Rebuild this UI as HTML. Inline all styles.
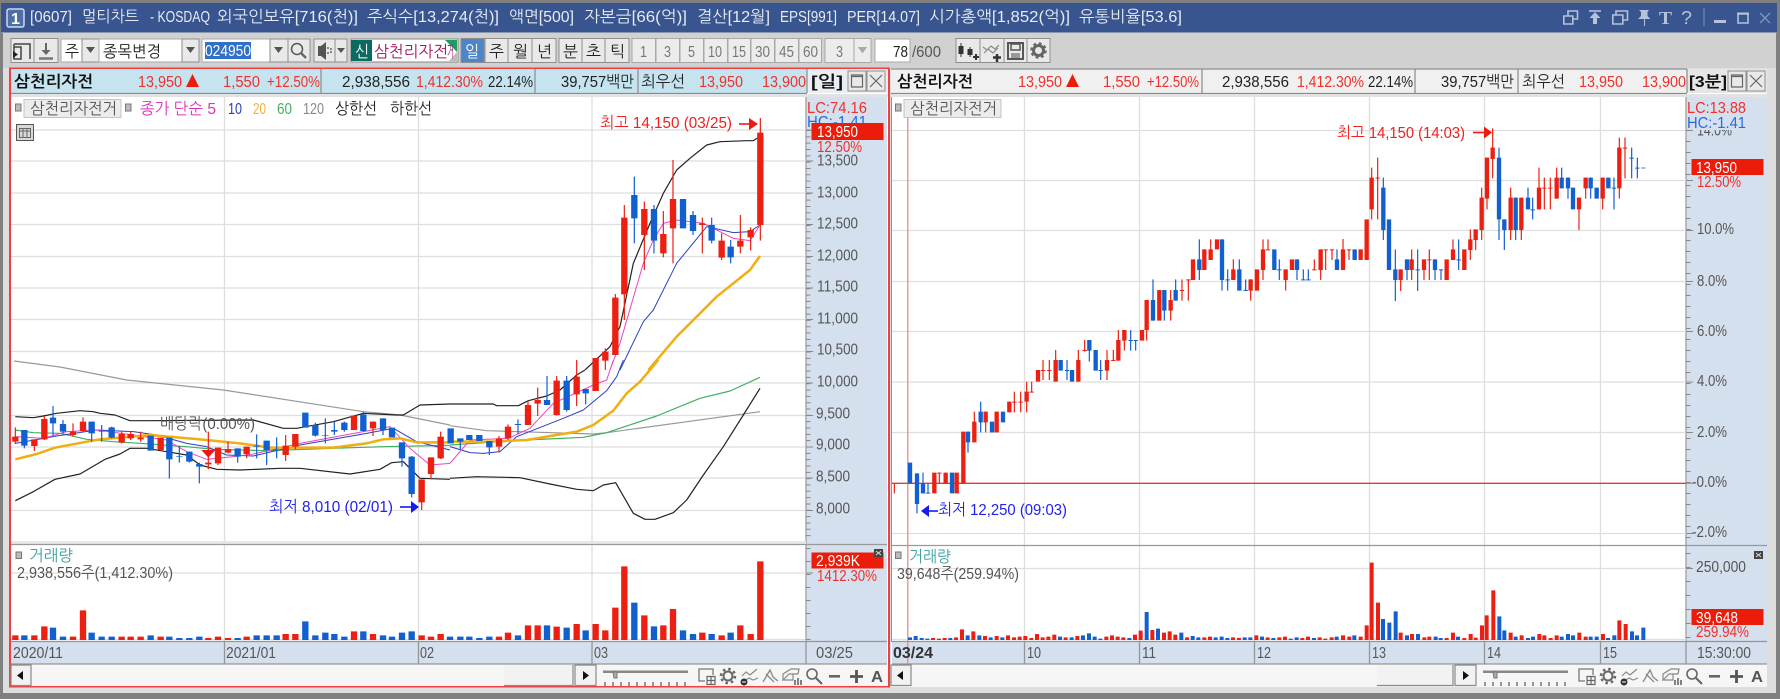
<!DOCTYPE html>
<html><head><meta charset="utf-8"><title>멀티차트</title>
<style>
html,body{margin:0;padding:0;background:#dcdcdc;width:1780px;height:699px;overflow:hidden}
svg{display:block;filter:blur(.35px)}
text{font-family:"Liberation Sans","NanumGothic","Noto Sans CJK KR",sans-serif;font-size:16px;fill:#444}
.t{fill:#e6ebf4}.r{fill:#f0302a}.k{fill:#222}.g{fill:#555}.w{fill:#fff}.b{font-weight:bold;fill:#111}
.bl{fill:#2020f0}.rr{fill:#f02020}
.ru{stroke:#ec2012;fill:none}.bu{stroke:#1260d0;fill:none}
.ln{fill:none;stroke-linejoin:round}
.btn{fill:#e9e9e9;stroke:#8e8e8e}
.ic{fill:none;stroke:#555;stroke-width:1.5}
.ti{fill:none;stroke:#b4c2da;stroke-width:1.6}
</style></head><body>
<svg width="1780" height="699" viewBox="0 0 1780 699" xmlns="http://www.w3.org/2000/svg">
<rect width="1780" height="699" fill="#808080"/>
<rect x="3" y="3" width="1773" height="690" fill="#dedede"/>
<!-- title -->
<rect x="1" y="3" width="1776" height="29" fill="#39558f"/>
<rect x="1" y="32" width="1776" height="1" fill="#8a97b0"/>
<rect x="7" y="9" width="17" height="18" rx="2" fill="#4f6ea8" stroke="#cfd8e8" stroke-width="1.5"/>
<text x="11" y="24" class="w" style="font-weight:bold" textLength="9" lengthAdjust="spacingAndGlyphs">1</text>
<text x="30" y="22" class="t" textLength="42" lengthAdjust="spacingAndGlyphs">[0607]</text>
<text x="82" y="22" class="t" textLength="57" lengthAdjust="spacingAndGlyphs">멀티차트</text>
<text x="150" y="22" class="t" textLength="60" lengthAdjust="spacingAndGlyphs">- KOSDAQ</text>
<text x="217" y="22" class="t" textLength="141" lengthAdjust="spacingAndGlyphs">외국인보유[716(천)]</text>
<text x="367" y="22" class="t" textLength="132" lengthAdjust="spacingAndGlyphs">주식수[13,274(천)]</text>
<text x="509" y="22" class="t" textLength="65" lengthAdjust="spacingAndGlyphs">액면[500]</text>
<text x="584" y="22" class="t" textLength="103" lengthAdjust="spacingAndGlyphs">자본금[66(억)]</text>
<text x="697" y="22" class="t" textLength="73" lengthAdjust="spacingAndGlyphs">결산[12월]</text>
<text x="780" y="22" class="t" textLength="57" lengthAdjust="spacingAndGlyphs">EPS[991]</text>
<text x="847" y="22" class="t" textLength="73" lengthAdjust="spacingAndGlyphs">PER[14.07]</text>
<text x="929" y="22" class="t" textLength="141" lengthAdjust="spacingAndGlyphs">시가총액[1,852(억)]</text>
<text x="1079" y="22" class="t" textLength="103" lengthAdjust="spacingAndGlyphs">유통비율[53.6]</text>
<!-- title icons -->
<path class="ti" d="M1563.8 16h9v8h-9zM1568 16v-5h9.500v8h-4.500"/>
<path class="ti" d="M1589 11h12" /><path d="M1595 12l5.500 6h-3.500v6h-4v-6h-3.500z" fill="#b4c2da"/>
<path class="ti" d="M1612.800 15h10v9h-10zM1616 15v-4h11.500v9h-4"/>
<path d="M1639 10h10l-1.500 2v4l3 3h-5.500v7h-1v-7h-6l3-3v-4z" fill="#b4c2da"/>
<text x="1659" y="24" style="font-family:'Liberation Serif',serif;fill:#b4c2da;font-size:18px;font-weight:bold" textLength="13" lengthAdjust="spacingAndGlyphs">T</text>
<text x="1681" y="24" style="fill:#b4c2da;font-size:18px" textLength="11" lengthAdjust="spacingAndGlyphs">?</text>
<path d="M1704 8v18" stroke="#7e90b5" stroke-width="1" fill="none"/>
<rect x="1714" y="20" width="12" height="3" fill="#b4c2da"/>
<path class="ti" d="M1738 14h10v9h-10z"/><path d="M1737 12.500h12v2h-12z" fill="#b4c2da"/>
<path d="M1760 13l10 10M1770 13l-10 10" stroke="#7f92b8" stroke-width="1.400" fill="none"/>
<!-- toolbar -->
<rect x="3" y="33" width="1773" height="35" fill="#d1d1d1"/>
<g stroke-width="1">
<rect class="btn" x="11" y="38.500" width="23" height="24"/><rect class="btn" x="34" y="38.500" width="24" height="24"/>
<rect x="61" y="39" width="21" height="23" fill="#fff" stroke="#aaa"/><rect class="btn" x="82" y="39" width="17" height="23"/>
<rect x="99" y="39" width="83" height="23" fill="#fff" stroke="#aaa"/><rect class="btn" x="182" y="39" width="17" height="23"/>
<rect x="202" y="39" width="68" height="23" fill="#fff" stroke="#aaa"/><rect x="205" y="42" width="46" height="17" fill="#2f70c8"/>
<rect class="btn" x="270" y="39" width="18" height="23"/><rect class="btn" x="288" y="39" width="22" height="23"/>
<rect class="btn" x="314" y="39" width="21" height="23"/><rect class="btn" x="335" y="39" width="12" height="23"/>
<rect x="351" y="39" width="107" height="23" fill="#fff" stroke="#888"/><rect x="351" y="40" width="21" height="21" fill="#0d6a63"/>
<path d="M445 40h12v12z" fill="#17a060"/><path d="M457 52v9h-8z" fill="#bbb"/>
<rect x="461" y="38.500" width="23" height="24" fill="#4d86c8" stroke="#8e8e8e"/>
<rect class="btn" x="485" y="38.500" width="23" height="24"/><rect class="btn" x="508" y="38.500" width="24" height="24"/><rect class="btn" x="532" y="38.500" width="24" height="24"/>
<rect class="btn" x="559" y="38.500" width="23" height="24"/><rect class="btn" x="582" y="38.500" width="23" height="24"/><rect class="btn" x="605" y="38.500" width="24" height="24"/>
<g fill="#ececec" stroke="#a8a8a8"><rect x="632" y="38.500" width="23.500" height="24"/><rect x="656" y="38.500" width="23.500" height="24"/><rect x="680" y="38.500" width="23.500" height="24"/><rect x="704" y="38.500" width="23.500" height="24"/><rect x="728" y="38.500" width="22.500" height="24"/><rect x="751" y="38.500" width="23.500" height="24"/><rect x="775" y="38.500" width="23.500" height="24"/><rect x="799" y="38.500" width="22.500" height="24"/><rect x="825" y="38.500" width="29" height="24"/><rect x="854" y="38.500" width="17" height="24"/></g>
<rect x="875" y="39" width="35" height="23" fill="#fff" stroke="#aaa"/>
<rect class="btn" x="956" y="38.500" width="24" height="24"/><rect class="btn" x="980" y="38.500" width="24" height="24"/><rect class="btn" x="1004" y="38.500" width="23" height="24"/><rect class="btn" x="1027" y="38.500" width="23" height="24"/>
</g>
<!-- toolbar icons -->
<path d="M14 44h16v15M14 59V47h7v12zM14 44v3" fill="none" stroke="#444" stroke-width="1.500"/><path d="M13 51l5 3.500-5 3.500z" fill="#222"/>
<path d="M46 43v9" stroke="#666" stroke-width="2"/><path d="M41.500 50h9l-4.500 5z" fill="#666"/><path d="M39 58.500h14" stroke="#777" stroke-width="2.500"/>
<path d="M86 47h9l-4.500 6z M186 47h9l-4.500 6zM274 47h9l-4.500 6zM337 48h8l-4 5zM858 47h9l-4.500 6z" fill="#555"/><path d="M858 47h9l-4.500 6z" fill="#aaa"/>
<circle cx="297" cy="49" r="5.500" class="ic" stroke-width="2"/><path d="M301 53l5 5" stroke="#666" stroke-width="2.500"/>
<path d="M318 46v10h3l5 4V42l-5 4z" fill="#555"/><path d="M328 47v2M331 48v2M328 52v2M331 51v2" stroke="#666" stroke-width="1.500"/>
<path d="M961 43v14M970 47v10" stroke="#333"/><rect x="958.500" y="46" width="5" height="8" fill="#333"/><rect x="967.500" y="49" width="5" height="6" fill="#333"/><path d="M973 57h6M976 54v6" stroke="#333" stroke-width="2"/>
<path d="M983 47l4 3 4-4 4 3 4-4M984 53l4-4 5 4 5-5" fill="none" stroke="#888" stroke-width="1.200"/><path d="M993 57.500h8M997 54v8" stroke="#333" stroke-width="2.500"/>
<path d="M1008 43h15v16h-15z" fill="none" stroke="#555" stroke-width="2"/><rect x="1011" y="44" width="9" height="6" fill="none" stroke="#555" stroke-width="1.500"/><rect x="1011" y="53" width="9" height="5" fill="#999"/>
<circle cx="1038.500" cy="50.500" r="5" fill="none" stroke="#666" stroke-width="3"/><circle cx="1038.500" cy="50.500" r="7" fill="none" stroke="#666" stroke-width="2.500" stroke-dasharray="2.800 2.700"/>
<text x="65" y="57" class="k" textLength="14" lengthAdjust="spacingAndGlyphs">주</text>
<text x="103" y="57" class="k" textLength="58" lengthAdjust="spacingAndGlyphs">종목변경</text>
<text x="205" y="56" class="w" textLength="46" lengthAdjust="spacingAndGlyphs">024950</text>
<text x="355" y="57" class="w" textLength="14" lengthAdjust="spacingAndGlyphs">신</text>
<text x="374" y="57" style="fill:#a0145a" textLength="74" lengthAdjust="spacingAndGlyphs">삼천리자전</text>
<text x="447" y="57" style="fill:#a0145a" textLength="7" lengthAdjust="spacingAndGlyphs">거</text>
<text x="465" y="57" class="w" textLength="14" lengthAdjust="spacingAndGlyphs">일</text>
<text x="489" y="57" class="k" textLength="15" lengthAdjust="spacingAndGlyphs">주</text>
<text x="513" y="57" class="k" textLength="15" lengthAdjust="spacingAndGlyphs">월</text>
<text x="537" y="57" class="k" textLength="15" lengthAdjust="spacingAndGlyphs">년</text>
<text x="563" y="57" class="k" textLength="15" lengthAdjust="spacingAndGlyphs">분</text>
<text x="586" y="57" class="k" textLength="15" lengthAdjust="spacingAndGlyphs">초</text>
<text x="610" y="57" class="k" textLength="15" lengthAdjust="spacingAndGlyphs">틱</text>
<g class="g" style="fill:#777">
<text x="640" y="57" style="fill:#777" textLength="7" lengthAdjust="spacingAndGlyphs">1</text>
<text x="664" y="57" style="fill:#777" textLength="7" lengthAdjust="spacingAndGlyphs">3</text>
<text x="688" y="57" style="fill:#777" textLength="7" lengthAdjust="spacingAndGlyphs">5</text>
<text x="708" y="57" style="fill:#777" textLength="14" lengthAdjust="spacingAndGlyphs">10</text>
<text x="732" y="57" style="fill:#777" textLength="14" lengthAdjust="spacingAndGlyphs">15</text>
<text x="755" y="57" style="fill:#777" textLength="15" lengthAdjust="spacingAndGlyphs">30</text>
<text x="779" y="57" style="fill:#777" textLength="15" lengthAdjust="spacingAndGlyphs">45</text>
<text x="803" y="57" style="fill:#777" textLength="15" lengthAdjust="spacingAndGlyphs">60</text>
<text x="836" y="57" style="fill:#777" textLength="7" lengthAdjust="spacingAndGlyphs">3</text>
</g>
<text x="893" y="57" class="k" textLength="15" lengthAdjust="spacingAndGlyphs">78</text>
<text x="912" y="57" class="g" textLength="29" lengthAdjust="spacingAndGlyphs">/600</text>

<!-- LEFT PANEL -->
<rect x="9" y="67.500" width="881" height="620" fill="#f04040"/>
<rect x="11" y="69" width="877" height="617" fill="#fff"/>
<rect x="11" y="69" width="796" height="24" fill="#c6e4f0"/>
<rect x="807" y="69" width="81" height="24" fill="#e9eef2"/>
<path d="M11 93.500H807M321 69v24M535 69v24M638 69v24M807 69v24" stroke="#8a8a8a" fill="none" stroke-width="1.200"/>
<rect x="11" y="94" width="877" height="3" fill="#e2e2e2"/>
<!-- RIGHT PANEL -->
<rect x="891" y="69" width="876" height="618" fill="#fff"/>
<rect x="891" y="69" width="796" height="24" fill="#f0f0f0"/>
<rect x="1687" y="69" width="80" height="24" fill="#e6e6e6"/>
<path d="M891 93.500H1687M891 69H1687M1202 69v24M1415 69v24M1518 69v24M1687 69v24" stroke="#8a8a8a" fill="none" stroke-width="1.200"/>
<rect x="891" y="94" width="876" height="3" fill="#e2e2e2"/>
<rect x="891" y="97" width="1" height="545" fill="#a88"/>
<!-- header buttons -->
<rect class="btn" x="848" y="71" width="18" height="20"/><rect class="btn" x="867" y="71" width="18" height="20"/>
<rect class="btn" x="1728" y="71" width="18" height="20"/><rect class="btn" x="1747" y="71" width="18" height="20"/>
<g fill="none" stroke="#666" stroke-width="1.200"><path d="M851.500 75h11v12h-11zM851.500 76.500h11M870 75l12 12M882 75l-12 12"/><path d="M1731.500 75h11v12h-11zM1731.500 76.500h11M1750 75l12 12M1762 75l-12 12"/></g>
<!-- left header text -->
<text x="14" y="87" class="b" textLength="79" lengthAdjust="spacingAndGlyphs">삼천리자전</text>
<text x="138" y="87" class="r" textLength="44" lengthAdjust="spacingAndGlyphs">13,950</text>
<path d="M186 87l6.500-13 6.500 13z" fill="#ec1c0a"/>
<text x="223" y="87" class="r" textLength="37" lengthAdjust="spacingAndGlyphs">1,550</text>
<text x="267" y="87" class="r" textLength="53" lengthAdjust="spacingAndGlyphs">+12.50%</text>
<text x="342" y="87" class="k" textLength="68" lengthAdjust="spacingAndGlyphs">2,938,556</text>
<text x="416" y="87" class="r" textLength="67" lengthAdjust="spacingAndGlyphs">1,412.30%</text>
<text x="488" y="87" class="k" textLength="45" lengthAdjust="spacingAndGlyphs">22.14%</text>
<text x="561" y="87" class="k" textLength="73" lengthAdjust="spacingAndGlyphs">39,757백만</text>
<text x="641" y="87" class="k" textLength="44" lengthAdjust="spacingAndGlyphs">최우선</text>
<text x="699" y="87" class="r" textLength="44" lengthAdjust="spacingAndGlyphs">13,950</text>
<text x="762" y="87" class="r" textLength="44" lengthAdjust="spacingAndGlyphs">13,900</text>
<text x="811" y="87" class="b" textLength="32" lengthAdjust="spacingAndGlyphs">[일]</text>
<!-- right header text -->
<text x="897" y="87" class="b" textLength="76" lengthAdjust="spacingAndGlyphs">삼천리자전</text>
<text x="1018" y="87" class="r" textLength="44" lengthAdjust="spacingAndGlyphs">13,950</text>
<path d="M1066 87l6.500-13 6.500 13z" fill="#ec1c0a"/>
<text x="1103" y="87" class="r" textLength="37" lengthAdjust="spacingAndGlyphs">1,550</text>
<text x="1147" y="87" class="r" textLength="52" lengthAdjust="spacingAndGlyphs">+12.50%</text>
<text x="1222" y="87" class="k" textLength="67" lengthAdjust="spacingAndGlyphs">2,938,556</text>
<text x="1297" y="87" class="r" textLength="67" lengthAdjust="spacingAndGlyphs">1,412.30%</text>
<text x="1368" y="87" class="k" textLength="45" lengthAdjust="spacingAndGlyphs">22.14%</text>
<text x="1441" y="87" class="k" textLength="73" lengthAdjust="spacingAndGlyphs">39,757백만</text>
<text x="1522" y="87" class="k" textLength="43" lengthAdjust="spacingAndGlyphs">최우선</text>
<text x="1579" y="87" class="r" textLength="44" lengthAdjust="spacingAndGlyphs">13,950</text>
<text x="1642" y="87" class="r" textLength="44" lengthAdjust="spacingAndGlyphs">13,900</text>
<text x="1689" y="87" class="b" textLength="38" lengthAdjust="spacingAndGlyphs">[3분]</text>

<!-- axis backgrounds -->
<rect x="806" y="97" width="81" height="545" fill="#d5e0ee"/>
<rect x="1686" y="97" width="81" height="545" fill="#d5e0ee"/>
<path d="M806 97V642M1686 97V642" stroke="#9a9a9a" stroke-width="1.200" fill="none"/>
<!-- left grid -->
<path d="M11 130H806M11 161H806M11 193H806M11 224.500H806M11 256.500H806M11 288H806M11 319.500H806M11 351.500H806M11 383H806M11 415.500H806M11 447H806M11 478H806M11 510.500H806M11 573H806M11 639.500H806M224.500 97V642M418.500 97V642M592 97V642" stroke="#dedede" stroke-width="1.300" fill="none"/>
<rect x="11" y="541" width="795" height="3" fill="#e8e8e8"/><path d="M11 544.500H887" stroke="#999" stroke-width="1.200"/>
<!-- right grid -->
<path d="M892 130.500H1686M892 180.500H1686M892 230.500H1686M892 281.500H1686M892 331.500H1686M892 382H1686M892 432.500H1686M892 533.500H1686M892 568.500H1686M892 639.500H1686M1024.500 97V642M1139.500 97V642M1254.500 97V642M1369.500 97V642M1484.500 97V642M1600.500 97V642" stroke="#dedede" stroke-width="1.300" fill="none"/>
<path d="M892 545.500H1767" stroke="#999" stroke-width="1.200"/>
<path d="M907.800 105V664" stroke="#ea8a8a" stroke-width="1.300"/>
<path d="M892 483.300H1686" stroke="#f03434" stroke-width="1.400"/>
<!-- axis ticks -->
<g fill="none" stroke="#888">
<path d="M808 130V540" stroke-width="5" stroke-dasharray="1 5.330"/>
<path d="M806 130h7M806 161h7M806 193h7M806 224.500h7M806 256.500h7M806 288h7M806 319.500h7M806 351.500h7M806 383h7M806 415.500h7M806 447h7M806 478h7M806 510.500h7M806 573h7"/>
<path d="M808 548V640" stroke-width="5" stroke-dasharray="1 12"/>
<path d="M1688 130V540" stroke-width="5" stroke-dasharray="1 10"/>
<path d="M1686 130.500h7M1686 180.500h7M1686 230.500h7M1686 281.500h7M1686 331.500h7M1686 382h7M1686 432.500h7M1686 483.300h7M1686 533.500h7M1686 568.500h7"/>
<path d="M1688 553V640" stroke-width="5" stroke-dasharray="1 13"/>
</g>

<!-- LEFT MA LINES Z4 -->
<g class="ln" transform="translate(0,380) scale(.33333)">
<path stroke="#999" stroke-width="3.600" fill="none" d="M42 -57L180 -39L380 0L670 30L1090 95L1200 105L1350 135"/>
<path stroke="#222" stroke-width="3.600" fill="none" d="M46 110L100 113L130 108L170 100L240 92L280 95L300 100L345 105L390 122L450 122L760 120L850 145L890 145L1000 125L1090 100L1190 105L1210 105L1260 75L1350 72"/>
<path stroke="#222" stroke-width="3.600" fill="none" d="M46 362L100 335L165 298L240 282L315 238L360 222L390 205L440 205L500 215L560 225L600 255L650 268L720 270L840 265L900 265L1050 282L1140 268L1175 248L1210 245L1260 295L1350 298"/>
<path stroke="#3fb060" stroke-width="3.600" fill="none" d="M46 150L100 158L180 160L260 178L340 185L420 190L560 200L640 208L800 212L1000 205L1150 200L1350 196"/>
<path stroke="#2a40c0" stroke-width="3" fill="none" d="M46 190L130 175L170 168L290 150L400 155L470 165L560 190L620 200L680 225L760 228L900 195L1100 160L1180 145L1250 185L1350 210"/>
<path stroke="#ee44c0" stroke-width="3" fill="none" d="M46 170L130 175L200 155L290 150L400 165L500 180L560 215L620 238L700 230L760 222L900 190L1090 155L1170 140L1230 205L1290 255L1350 250"/>
<path stroke="#f0ae10" stroke-width="7.500" fill="none" d="M46 238L110 222L165 203L260 185L300 178L450 165L600 178L720 190L810 203L1000 203L1100 190L1150 178L1200 175L1250 187L1350 187"/>
</g>
<!-- LEFT LINES Z12 -->
<g class="ln" transform="translate(450,360) scale(.33333)">
<path stroke="#999" stroke-width="3.600" fill="none" d="M0 197L110 212L210 215L430 222L470 218L930 155"/>
<path stroke="#222" stroke-width="3.600" fill="none" d="M0 132H130L140 137H205L235 122L290 108L330 90L380 45L405 30"/>
<path stroke="#222" stroke-width="3.600" fill="none" d="M0 355L80 350L210 353L300 372L380 388L430 392L460 375L497 368L550 460L585 478L615 478L670 458L710 420L760 345L820 260L880 165L930 85"/>
<path stroke="#3fb060" stroke-width="3.600" fill="none" d="M0 255L120 247L230 240L400 232L470 218L620 168L750 115L840 93L930 52"/>
<path stroke="#2a40c0" stroke-width="3" fill="none" d="M0 260L60 278L100 280L150 275L200 230L340 175L400 150L470 92L500 50L520 0"/>
<path stroke="#ee44c0" stroke-width="3" fill="none" d="M0 310L60 240L175 235L240 205L310 130L430 75L470 60L490 0"/>
<path stroke="#f0ae10" stroke-width="7.500" fill="none" d="M0 245L120 245L230 240L380 215L430 195L490 152L530 100L570 65L625 0"/>
</g>
<!-- LEFT LINES Z5 -->
<g class="ln" transform="translate(450,120) scale(.33333)">
<path stroke="#222" stroke-width="3.600" fill="none" d="M405 750L480 680L510 620L550 430L600 310L640 220L680 150L720 115L770 75L810 65L890 62L910 62L932 48"/>
<path stroke="#2a40c0" stroke-width="3" fill="none" d="M510 750L580 605L610 570L680 430L770 320L850 338L900 335L930 315"/>
<path stroke="#ee44c0" stroke-width="3" fill="none" d="M480 750L510 670L580 430L610 360L640 310L680 300L760 310L850 355L900 362L930 315"/>
<path stroke="#f0ae10" stroke-width="7.500" fill="none" d="M595 750L680 650L760 570L800 530L900 450L930 408"/>
</g>
<!-- LEFT CANDLES Z4 -->
<g transform="translate(0,380) scale(.33333)">
<path class="ru" stroke-width="3.600" d="M46 142V192M103 178V213M133 108V180M219 130V170M249 112V155M365 155V190M392 155V180M422 155V185M482 173V212M625 155V268M654 203V255M684 185V220M740 200V235M857 165V243M886 162V208M1062 107V150M1119 125V168M1265 298V390M1293 232V298M1322 155V237"/>
<path class="ru" stroke-width="19" d="M46 170V185M103 178V198M133 117V178M219 155V165M249 125V153M365 162V188M392 162V175M422 172V178M482 173V210M625 248V253M654 203V250M684 207V218M740 200V222M857 197V225M886 162V200M1062 107V150M1119 125V145M1265 298V367M1293 232V282M1322 170V235"/>
<path class="bu" stroke-width="3.600" d="M73 150V205M159 78V165M189 120V160M275 125V185M305 135V185M335 140V175M508 173V296M538 198V248M568 215V248M598 248V310M713 205V248M770 163V235M800 182V255M830 172V235M946 128V170M976 115V190M1003 125V165M1033 125V155M1090 95V155M1149 115V165M1206 187V260M1235 228V352"/>
<path class="bu" stroke-width="19" d="M73 150V197M159 113V130M189 132V155M275 125V160M305 152V155M335 142V173M452 167V212M508 173V238M538 228V230M568 215V245M598 252V260M713 205V230M770 197V200M800 182V210M830 208V210M916 98V143M946 135V167M976 165V167M1003 150V155M1033 128V150M1090 103V153M1149 115V150M1176 143V172M1206 187V235M1235 230V342"/>
<path d="M604 210H646L625 233Z" fill="#f01810"/>
</g>
<!-- LEFT CANDLES Z12 -->
<g transform="translate(450,360) scale(.33333)">
<path class="ru" stroke-width="3.600" d="M147 228V277M174 193V240M234 122V195M263 83V168M320 48V167M380 0V138M437 -6V93"/>
<path class="ru" stroke-width="19" d="M147 235V260M174 200V235M234 135V195M263 120V131M320 62V165M380 50V103M437 -6V93"/>
<path class="bu" stroke-width="3.600" d="M31 235V270M118 243V285M204 178V222M291 48V135M350 48V155M407 87V133"/>
<path class="bu" stroke-width="19" d="M2 205V250M31 235V245M58 225V240M88 225V243M118 243V262M204 192V195M291 120V135M350 62V150M407 87V100"/>
</g>
<!-- LEFT CANDLES Z5 -->
<g transform="translate(450,120) scale(.33333)">
<path class="ru" stroke-width="3.600" d="M466 685V750M496 522V705M523 255V600M583 245V450M640 273V412M669 120V430M757 293V400M815 340V420M871 285V400M902 322V392M931 -6V362"/>
<path class="ru" stroke-width="19" d="M466 695V722M496 533V705M523 293V523M583 267V345M640 342V400M669 237V325M757 310V315M815 362V413M871 362V380M902 330V352M931 38V315"/>
<path class="bu" stroke-width="3.600" d="M553 170V370M612 255V400M729 273V345M785 293V370M842 360V430"/>
<path class="bu" stroke-width="19" d="M553 225V295M612 267V362M699 237V325M729 285V333M785 315V362M842 380V412"/>
</g>
<!-- LEFT VOLUME -->
<g transform="translate(0,530) scale(.33333)" fill="none">
<path class="ru" stroke-width="19" d="M46 330V316M103 330V316M133 330V289M219 330V320M249 330V241M365 330V320M392 330V320M422 330V320M482 330V320M625 330V324M654 330V320M684 330V324M740 330V320M857 330V312M886 330V312M1062 330V304M1119 330V312M1265 330V316M1293 330V320M1322 330V312"/>
<path class="bu" stroke-width="19" d="M73 330V316M159 330V293M189 330V320M275 330V308M305 330V320M335 330V320M452 330V316M508 330V320M538 330V324M568 330V324M598 330V320M713 330V324M770 330V316M800 330V316M830 330V316M916 330V274M946 330V316M976 330V308M1003 330V312M1033 330V320M1090 330V304M1149 330V316M1176 330V320M1206 330V308M1235 330V304M1350 330V320"/>
</g>
<g transform="translate(450,530) scale(.33333)" fill="none">
<path class="ru" stroke-width="19" d="M147 330V320M174 330V308M234 330V286M263 330V286M320 330V290M380 330V282M437 330V282M466 330V301M496 330V233M523 330V109M583 330V256M640 330V286M669 330V237M757 330V308M815 330V316M871 330V286M902 330V312M931 330V94"/>
<path class="bu" stroke-width="19" d="M31 330V320M58 330V320M88 330V324M118 330V320M204 330V316M291 330V286M350 330V293M407 330V301M553 330V218M612 330V289M699 330V301M729 330V312M785 330V312M842 330V308"/>
</g>
<!-- RIGHT CANDLES Z8 -->
<g transform="translate(890,380) scale(.33333)">
<path class="ru" stroke-width="3.600" d="M13 310V340M148 278V310M253 95V187M287 95V157M373 35V97M392 35V97M410 5V97M425 5V36"/>
<path class="ru" stroke-width="13" d="M133 278V340M148 278V281M167 278V310M200 278V340M220 155V310M253 125V187M287 95V127M320 95V157M358 65V97M373 65V68M392 65V68M410 35V65M425 35V38"/>
<path class="bu" stroke-width="3.600" d="M81 280V400M99 278V340M114 310V340M234 155V218M272 65V157"/>
<path class="bu" stroke-width="13" d="M60 248V310M81 280V372M99 310V340M114 338V341M186 278V340M234 155V187M272 95V127M306 125V157M339 95V127"/>
</g>
<!-- RIGHT CANDLES Z11 -->
<g transform="translate(890,100) scale(.33333)">
<path class="ru" stroke-width="3.600" d="M459 780V840M478 780V840M497 750V845M565 750V845M584 720V755M651 750V840M670 750V782M685 690V782M703 690V752M770 690V722M842 570V662M876 538V602M895 538V602M962 418V480M1030 478V540M1082 538V602M1119 418V540M1134 418V450M1187 508V572M1273 478V510M1292 448V540M1307 448V510M1326 448V480"/>
<path class="ru" stroke-width="13" d="M444 810V845M459 810V813M478 810V813M497 780V845M565 780V845M584 750V753M651 780V812M670 780V783M685 720V782M703 690V722M756 690V722M770 600V690M808 570V662M842 600V632M876 570V573M895 538V541M909 478V540M943 448V510M962 448V480M981 418V448M1030 508V540M1082 538V572M1101 508V572M1119 448V510M1134 448V451M1187 508V540M1206 478V510M1273 508V511M1292 448V510M1307 448V451M1326 448V451"/>
<path class="bu" stroke-width="3.600" d="M531 780V840M546 810V845M598 720V785M632 780V840M722 690V752M737 720V752M789 538V662M823 570V662M857 538V602M928 418V540M996 418V572M1013 508V572M1048 478V572M1067 538V572M1168 478V540M1221 478V540M1240 508V540M1255 508V540M1341 448V510"/>
<path class="bu" stroke-width="13" d="M512 780V812M531 810V813M546 810V845M598 720V752M617 750V812M632 810V813M722 720V723M737 720V723M789 600V662M823 570V632M857 570V602M928 478V510M996 418V540M1013 538V541M1048 508V572M1067 570V573M1153 448V510M1168 508V511M1221 478V510M1240 538V541M1255 538V541M1341 478V510"/>
</g>
<!-- RIGHT CANDLES Z9 -->
<g transform="translate(1300,100) scale(.33333)">
<path class="ru" stroke-width="3.600" d="M129 417V510M147 448V480M215 203V358M233 173V358M302 508V573M335 448V540M372 478V540M388 448V540M459 418V480M511 388V480M527 388V450M545 263V420M561 173V328M578 85V235M632 263V420M664 293V420M717 203V328M733 233V328M751 233V328M770 203V296M837 293V390M857 233V296M908 233V328M958 113V296M975 113V235"/>
<path class="ru" stroke-width="13" d="M129 448V510M147 448V451M182 448V480M200 358V480M215 233V328M233 233V236M302 508V540M335 478V510M372 478V510M388 478V481M440 478V540M459 448V480M493 448V510M511 418V450M527 388V420M545 293V390M561 173V296M578 143V177M632 293V390M664 293V390M717 263V328M733 263V266M751 263V266M770 233V296M837 293V328M857 233V265M908 233V296M958 143V265M975 143V146"/>
<path class="bu" stroke-width="3.600" d="M250 233V420M286 448V603M321 478V540M353 448V573M405 478V540M423 508V540M476 418V510M597 143V420M613 358V450M647 293V420M684 263V328M698 293V358M785 203V265M804 233V296M872 233V296M942 233V328M995 143V235M1012 173V235"/>
<path class="bu" stroke-width="13" d="M164 448V480M250 263V390M267 358V510M286 508V540M321 478V510M353 508V511M405 478V510M423 508V511M476 478V481M597 173V358M613 358V390M647 293V390M684 293V328M698 328V331M785 233V265M804 233V265M819 263V328M872 233V265M890 263V296M925 233V265M942 263V266M995 173V176M1012 203V206M1030 203V205"/>
</g>
<!-- RIGHT VOLUME -->
<g transform="translate(910,530) scale(.33333)" fill="none">
<path class="ru" stroke-width="12" d="M69 330v-6M87 330v-4M104 330v-6M138 330v-8M156 330v-32M190 330v-26M225 330v-12M260 330v-12M294 330v-14M312 330v-8M329 330v-10M346 330v-12M364 330v-6M381 330v-18M398 330v-8M415 330v-10M433 330v-16M467 330v-8M502 330v-12M589 330v-10M606 330v-14M623 330v-10M640 330v-8M675 330v-16M692 330v-28M727 330v-30M762 330v-22M779 330v-26M796 330v-16M831 330v-8M883 330v-8M900 330v-10M969 330v-8M987 330v-6M1039 330v-14M1073 330v-8M1108 330v-8M1125 330v-10M1177 330v-6M1194 330v-10M1229 330v-8M1246 330v-4"/>
<path class="bu" stroke-width="12" d="M0 330v-8M17 330v-12M35 330v-6M52 330v-4M121 330v-6M173 330v-14M208 330v-14M242 330v-8M277 330v-8M450 330v-10M485 330v-8M519 330v-14M537 330v-20M554 330v-10M571 330v-4M658 330v-6M710 330v-84M744 330v-34M814 330v-22M848 330v-12M865 330v-8M917 330v-8M935 330v-10M952 330v-6M1004 330v-8M1021 330v-8M1056 330v-10M1090 330v-6M1142 330v-4M1160 330v-8M1212 330v-6"/>
</g>
<g transform="translate(1330,530) scale(.33333)" fill="none">
<path class="ru" stroke-width="12" d="M5 330V322M39 330V316M58 330V320M92 330V320M110 330V286M125 330V98M144 330V218M212 330V308M246 330V312M283 330V322M298 330V320M350 330V324M369 330V308M403 330V324M422 330V312M437 330V323M456 330V286M470 330V256M490 330V181M542 330V308M575 330V316M628 330V312M643 330V316M662 330V324M680 330V316M748 330V308M767 330V320M819 330V312M868 330V271M887 330V282"/>
<path class="bu" stroke-width="12" d="M20 330V320M73 330V316M159 330V267M178 330V278M197 330V244M231 330V316M264 330V312M317 330V320M332 330V324M384 330V320M508 330V259M523 330V301M557 330V320M594 330V324M609 330V320M695 330V320M714 330V312M729 330V316M782 330V320M800 330V320M834 330V324M853 330V316M906 330V304M921 330V316M940 330V293"/>
</g>
<!-- legend left -->
<rect x="15.500" y="104" width="5.500" height="7" fill="#bbb" stroke="#777"/>
<rect x="24" y="99.500" width="97" height="18" fill="#ececec" stroke="#c4c4c4"/>
<text x="30" y="114" class="g" textLength="87" lengthAdjust="spacingAndGlyphs">삼천리자전거</text>
<rect x="125.500" y="104" width="5.500" height="7" fill="#bbb" stroke="#777"/>
<text x="140" y="114" style="fill:#e030c0" textLength="76" lengthAdjust="spacingAndGlyphs">종가 단순 5</text>
<text x="228" y="114" style="fill:#2840b8" textLength="14" lengthAdjust="spacingAndGlyphs">10</text>
<text x="253" y="114" style="fill:#f0b030" textLength="13" lengthAdjust="spacingAndGlyphs">20</text>
<text x="277" y="114" style="fill:#40b060" textLength="15" lengthAdjust="spacingAndGlyphs">60</text>
<text x="303" y="114" style="fill:#888" textLength="21" lengthAdjust="spacingAndGlyphs">120</text>
<text x="335" y="114" class="k" textLength="42" lengthAdjust="spacingAndGlyphs">상한선</text>
<text x="390" y="114" class="k" textLength="42" lengthAdjust="spacingAndGlyphs">하한선</text>
<rect x="16.500" y="124.500" width="17" height="16" fill="#d8d8d8" stroke="#555"/>
<path d="M19.500 128.500h11v9h-11zM23 128.500v9M27 128.500v9M19.500 131h11" fill="none" stroke="#666"/>
<!-- legend right -->
<rect x="895.500" y="104" width="5.500" height="7" fill="#bbb" stroke="#777"/>
<rect x="904" y="99.500" width="97" height="18" fill="#ececec" stroke="#c4c4c4"/>
<text x="910" y="114" class="g" textLength="87" lengthAdjust="spacingAndGlyphs">삼천리자전거</text>
<!-- left axis labels -->
<g>
<text x="817" y="165.500" class="g" textLength="41" lengthAdjust="spacingAndGlyphs">13,500</text>
<text x="817" y="197.500" class="g" textLength="41" lengthAdjust="spacingAndGlyphs">13,000</text>
<text x="817" y="228.500" class="g" textLength="41" lengthAdjust="spacingAndGlyphs">12,500</text>
<text x="817" y="260.500" class="g" textLength="41" lengthAdjust="spacingAndGlyphs">12,000</text>
<text x="817" y="291.500" class="g" textLength="41" lengthAdjust="spacingAndGlyphs">11,500</text>
<text x="817" y="323.500" class="g" textLength="41" lengthAdjust="spacingAndGlyphs">11,000</text>
<text x="817" y="354.500" class="g" textLength="41" lengthAdjust="spacingAndGlyphs">10,500</text>
<text x="817" y="386.500" class="g" textLength="41" lengthAdjust="spacingAndGlyphs">10,000</text>
<text x="816" y="418.500" class="g" textLength="34" lengthAdjust="spacingAndGlyphs">9,500</text>
<text x="816" y="449.500" class="g" textLength="34" lengthAdjust="spacingAndGlyphs">9,000</text>
<text x="816" y="481.500" class="g" textLength="34" lengthAdjust="spacingAndGlyphs">8,500</text>
<text x="816" y="513.500" class="g" textLength="34" lengthAdjust="spacingAndGlyphs">8,000</text>
</g>
<text x="807" y="113" class="r" textLength="60" lengthAdjust="spacingAndGlyphs">LC:74.16</text>
<text x="807" y="127" style="fill:#2a6ae0" textLength="60" lengthAdjust="spacingAndGlyphs">HC:-1.41</text>
<rect x="814" y="141" width="60" height="13" fill="#d5e0ee"/>
<text x="817" y="152" class="r" textLength="45" lengthAdjust="spacingAndGlyphs">12.50%</text>
<rect x="811.500" y="123" width="72" height="17" fill="#ec1c0a"/>
<text x="817" y="137" class="w" textLength="41" lengthAdjust="spacingAndGlyphs">13,950</text>
<text x="817" y="581" class="r" textLength="60" lengthAdjust="spacingAndGlyphs">1412.30%</text>
<rect x="811.500" y="552.500" width="72" height="16" fill="#ec1c0a"/>
<text x="816" y="566" class="w" textLength="44" lengthAdjust="spacingAndGlyphs">2,939K</text>
<rect x="874" y="549" width="9" height="8" fill="#444"/><path d="M876 551l5 4M881 551l-5 4" stroke="#ddd"/>
<!-- right axis labels -->
<text x="1697" y="135.500" class="g" textLength="35" lengthAdjust="spacingAndGlyphs">14.0%</text>
<text x="1697" y="234" class="g" textLength="37" lengthAdjust="spacingAndGlyphs">10.0%</text>
<text x="1697" y="286" class="g" textLength="30" lengthAdjust="spacingAndGlyphs">8.0%</text>
<text x="1697" y="336" class="g" textLength="30" lengthAdjust="spacingAndGlyphs">6.0%</text>
<text x="1697" y="386" class="g" textLength="30" lengthAdjust="spacingAndGlyphs">4.0%</text>
<text x="1697" y="437" class="g" textLength="30" lengthAdjust="spacingAndGlyphs">2.0%</text>
<text x="1692" y="487" class="g" textLength="35" lengthAdjust="spacingAndGlyphs">-0.0%</text>
<text x="1692" y="537" class="g" textLength="35" lengthAdjust="spacingAndGlyphs">-2.0%</text>
<rect x="1694" y="98" width="72" height="32" fill="#d5e0ee"/>
<text x="1687" y="113" class="r" textLength="59" lengthAdjust="spacingAndGlyphs">LC:13.88</text>
<text x="1687" y="128" style="fill:#2a6ae0" textLength="59" lengthAdjust="spacingAndGlyphs">HC:-1.41</text>
<text x="1697" y="187" class="r" textLength="44" lengthAdjust="spacingAndGlyphs">12.50%</text>
<rect x="1691.500" y="159" width="72" height="16" fill="#ec1c0a"/>
<text x="1696" y="173" class="w" textLength="41" lengthAdjust="spacingAndGlyphs">13,950</text>
<text x="1696" y="572" class="g" textLength="50" lengthAdjust="spacingAndGlyphs">250,000</text>
<text x="1696" y="637" class="r" textLength="53" lengthAdjust="spacingAndGlyphs">259.94%</text>
<rect x="1691.500" y="609" width="72" height="16" fill="#ec1c0a"/>
<text x="1696" y="623" class="w" textLength="42" lengthAdjust="spacingAndGlyphs">39,648</text>
<rect x="1754" y="551" width="9" height="8" fill="#444"/><path d="M1756 553l5 4M1761 553l-5 4" stroke="#ddd"/>
<!-- annotations -->
<text x="600" y="128" class="rr" textLength="132" lengthAdjust="spacingAndGlyphs">최고 14,150 (03/25)</text>
<path d="M739 124h12" stroke="#f01810" stroke-width="1.600"/><path d="M749 118l9 6-9 6z" fill="#f01810"/>
<text x="269" y="512" class="bl" textLength="124" lengthAdjust="spacingAndGlyphs">최저 8,010 (02/01)</text>
<path d="M400 507h12" stroke="#1818f0" stroke-width="1.600"/><path d="M411 501l8 6-8 6z" fill="#1818f0"/>
<text x="160" y="429" class="g" textLength="95" lengthAdjust="spacingAndGlyphs">배당락(0.00%)</text>
<text x="1337" y="138" class="rr" textLength="128" lengthAdjust="spacingAndGlyphs">최고 14,150 (14:03)</text>
<path d="M1473 132.500h12" stroke="#f01810" stroke-width="1.600"/><path d="M1484 126.500l8 6-8 6z" fill="#f01810"/>
<text x="938" y="515" class="bl" textLength="129" lengthAdjust="spacingAndGlyphs">최저 12,250 (09:03)</text>
<path d="M927 511h11" stroke="#1818f0" stroke-width="1.600"/><path d="M929 505l-8 6 8 6z" fill="#1818f0"/>
<!-- volume legends -->
<rect x="16" y="552" width="5.500" height="6.500" fill="#bbb" stroke="#777"/>
<text x="29" y="561" style="fill:#3aa0a0" textLength="44" lengthAdjust="spacingAndGlyphs">거래량</text>
<text x="17" y="578" class="g" textLength="156" lengthAdjust="spacingAndGlyphs">2,938,556주(1,412.30%)</text>
<rect x="895.500" y="552" width="5.500" height="6.500" fill="#bbb" stroke="#777"/>
<text x="909" y="562" style="fill:#3aa0a0" textLength="42" lengthAdjust="spacingAndGlyphs">거래량</text>
<text x="897" y="579" class="g" textLength="122" lengthAdjust="spacingAndGlyphs">39,648주(259.94%)</text>
<!-- time axes -->
<rect x="11" y="642" width="876" height="22" fill="#d5e0ee"/>
<rect x="892" y="642" width="875" height="22" fill="#d5e0ee"/>
<path d="M11 641.500H887M11 664H887M224.500 642v22M418.500 642v22M592 642v22M806 642v22M892 641.500H1767M892 664H1767M1024.500 642v22M1139.500 642v22M1254.500 642v22M1369.500 642v22M1484.500 642v22M1600.500 642v22M1686 642v22" stroke="#959595" stroke-width="1.300" fill="none"/>
<path d="M907.800 642V664" stroke="#ea8a8a" stroke-width="1.300"/>
<text x="13" y="658" class="g" textLength="50" lengthAdjust="spacingAndGlyphs">2020/11</text>
<text x="226" y="658" class="g" textLength="50" lengthAdjust="spacingAndGlyphs">2021/01</text>
<text x="420" y="658" class="g" textLength="14" lengthAdjust="spacingAndGlyphs">02</text>
<text x="594" y="658" class="g" textLength="14" lengthAdjust="spacingAndGlyphs">03</text>
<text x="816" y="658" class="g" textLength="37" lengthAdjust="spacingAndGlyphs">03/25</text>
<text x="893" y="658" class="b" style="fill:#333" textLength="40" lengthAdjust="spacingAndGlyphs">03/24</text>
<text x="1027" y="658" class="g" textLength="14" lengthAdjust="spacingAndGlyphs">10</text>
<text x="1142" y="658" class="g" textLength="14" lengthAdjust="spacingAndGlyphs">11</text>
<text x="1257" y="658" class="g" textLength="14" lengthAdjust="spacingAndGlyphs">12</text>
<text x="1372" y="658" class="g" textLength="14" lengthAdjust="spacingAndGlyphs">13</text>
<text x="1487" y="658" class="g" textLength="14" lengthAdjust="spacingAndGlyphs">14</text>
<text x="1603" y="658" class="g" textLength="14" lengthAdjust="spacingAndGlyphs">15</text>
<text x="1697" y="658" class="g" textLength="54" lengthAdjust="spacingAndGlyphs">15:30:00</text>
<!-- scrollbars -->
<rect x="11" y="665" width="877" height="21" fill="#f6f6f6"/>
<rect x="892" y="665" width="875" height="22" fill="#f6f6f6"/>
<g fill="#f2f2f2">
<rect x="504" y="665" width="69" height="20.500"/><rect x="1377" y="665" width="76" height="20.500"/>
</g>
<path d="M504 685.500h69v-20.500M1377 685.500h76v-20.500" fill="none" stroke="#8a8a8a" stroke-width="1.200"/>
<g stroke="#8a8a8a" stroke-width="1.200">
<path d="M11 665h20v20.500H11z" fill="#f2f2f2"/>
<path d="M575 665h21v20.500h-21z" fill="#f2f2f2"/>
<path d="M891 665h20v20.500h-20z" fill="#f2f2f2"/>
<path d="M1455 665h21v20.500h-21z" fill="#f2f2f2"/>
</g>
<path d="M23 671v9l-6-4.500zM903 671v9l-6-4.500zM583 671v9l6-4.500zM1463 671v9l6-4.500z" fill="#111"/>
<!-- tools left -->
<g id="tl">
<path d="M603 671.700h85" stroke="#888" stroke-width="2.500"/>
<path d="M613 672h4v6h-3z" fill="#aaa" stroke="#777"/>
<path d="M605 682v4M613 682v4M621 682v4M629 682v4M637 682v4M645 682v4M653 682v4M661 682v4M669 682v4M677 682v4M685 682v4" stroke="#555" stroke-width="1.200"/>
<path d="M705 681h-6v-12h14v6" fill="none" stroke="#777" stroke-width="1.300"/><path d="M707 676.500h8v8h-8zM711 676.500v8M707 680.500h8" fill="none" stroke="#666" stroke-width="1.200"/>
<circle cx="728" cy="676" r="4.500" fill="none" stroke="#666" stroke-width="2"/><circle cx="728" cy="676" r="7" fill="none" stroke="#666" stroke-width="2.500" stroke-dasharray="2.500 3"/>
<path d="M742 676l4-4 4 3 7-6M744 681l5-3 4 2 5-2" fill="none" stroke="#888" stroke-width="1.200"/><circle cx="744" cy="682" r="3.500" fill="#333"/><path d="M742 682h4" stroke="#fff"/>
<path d="M763 682l7-12 3 7 5 4M766 674l8 8" fill="none" stroke="#888" stroke-width="1.300"/>
<path d="M783 680v-6l8-5h8l-1 5h-9l-6 6h10v-6" fill="none" stroke="#888" stroke-width="1.200"/><path d="M795 680v5M798 678v7M801 680v5" stroke="#444" stroke-width="1.300"/>
<circle cx="812" cy="674" r="5" fill="none" stroke="#666" stroke-width="1.600"/><path d="M816 678l6 6" stroke="#666" stroke-width="2.200"/>
<rect x="829" y="675" width="11" height="2.600" fill="#666"/>
<path d="M850 676.500h13M856.500 670v13" stroke="#555" stroke-width="2.800"/>
<text x="871" y="682" style="font-weight:bold;fill:#555" textLength="12" lengthAdjust="spacingAndGlyphs">A</text>
</g>
<!-- tools right -->
<g transform="translate(880,0)">
<path d="M603 671.700h85" stroke="#888" stroke-width="2.500"/>
<path d="M613 672h4v6h-3z" fill="#aaa" stroke="#777"/>
<path d="M605 682v4M613 682v4M621 682v4M629 682v4M637 682v4M645 682v4M653 682v4M661 682v4M669 682v4M677 682v4M685 682v4" stroke="#555" stroke-width="1.200"/>
<path d="M705 681h-6v-12h14v6" fill="none" stroke="#777" stroke-width="1.300"/><path d="M707 676.500h8v8h-8zM711 676.500v8M707 680.500h8" fill="none" stroke="#666" stroke-width="1.200"/>
<circle cx="728" cy="676" r="4.500" fill="none" stroke="#666" stroke-width="2"/><circle cx="728" cy="676" r="7" fill="none" stroke="#666" stroke-width="2.500" stroke-dasharray="2.500 3"/>
<path d="M742 676l4-4 4 3 7-6M744 681l5-3 4 2 5-2" fill="none" stroke="#888" stroke-width="1.200"/><circle cx="744" cy="682" r="3.500" fill="#333"/><path d="M742 682h4" stroke="#fff"/>
<path d="M763 682l7-12 3 7 5 4M766 674l8 8" fill="none" stroke="#888" stroke-width="1.300"/>
<path d="M783 680v-6l8-5h8l-1 5h-9l-6 6h10v-6" fill="none" stroke="#888" stroke-width="1.200"/><path d="M795 680v5M798 678v7M801 680v5" stroke="#444" stroke-width="1.300"/>
<circle cx="812" cy="674" r="5" fill="none" stroke="#666" stroke-width="1.600"/><path d="M816 678l6 6" stroke="#666" stroke-width="2.200"/>
<rect x="829" y="675" width="11" height="2.600" fill="#666"/>
<path d="M850 676.500h13M856.500 670v13" stroke="#555" stroke-width="2.800"/>
<text x="871" y="682" style="font-weight:bold;fill:#555" textLength="12" lengthAdjust="spacingAndGlyphs">A</text>
</g>
</svg>
</body></html>
